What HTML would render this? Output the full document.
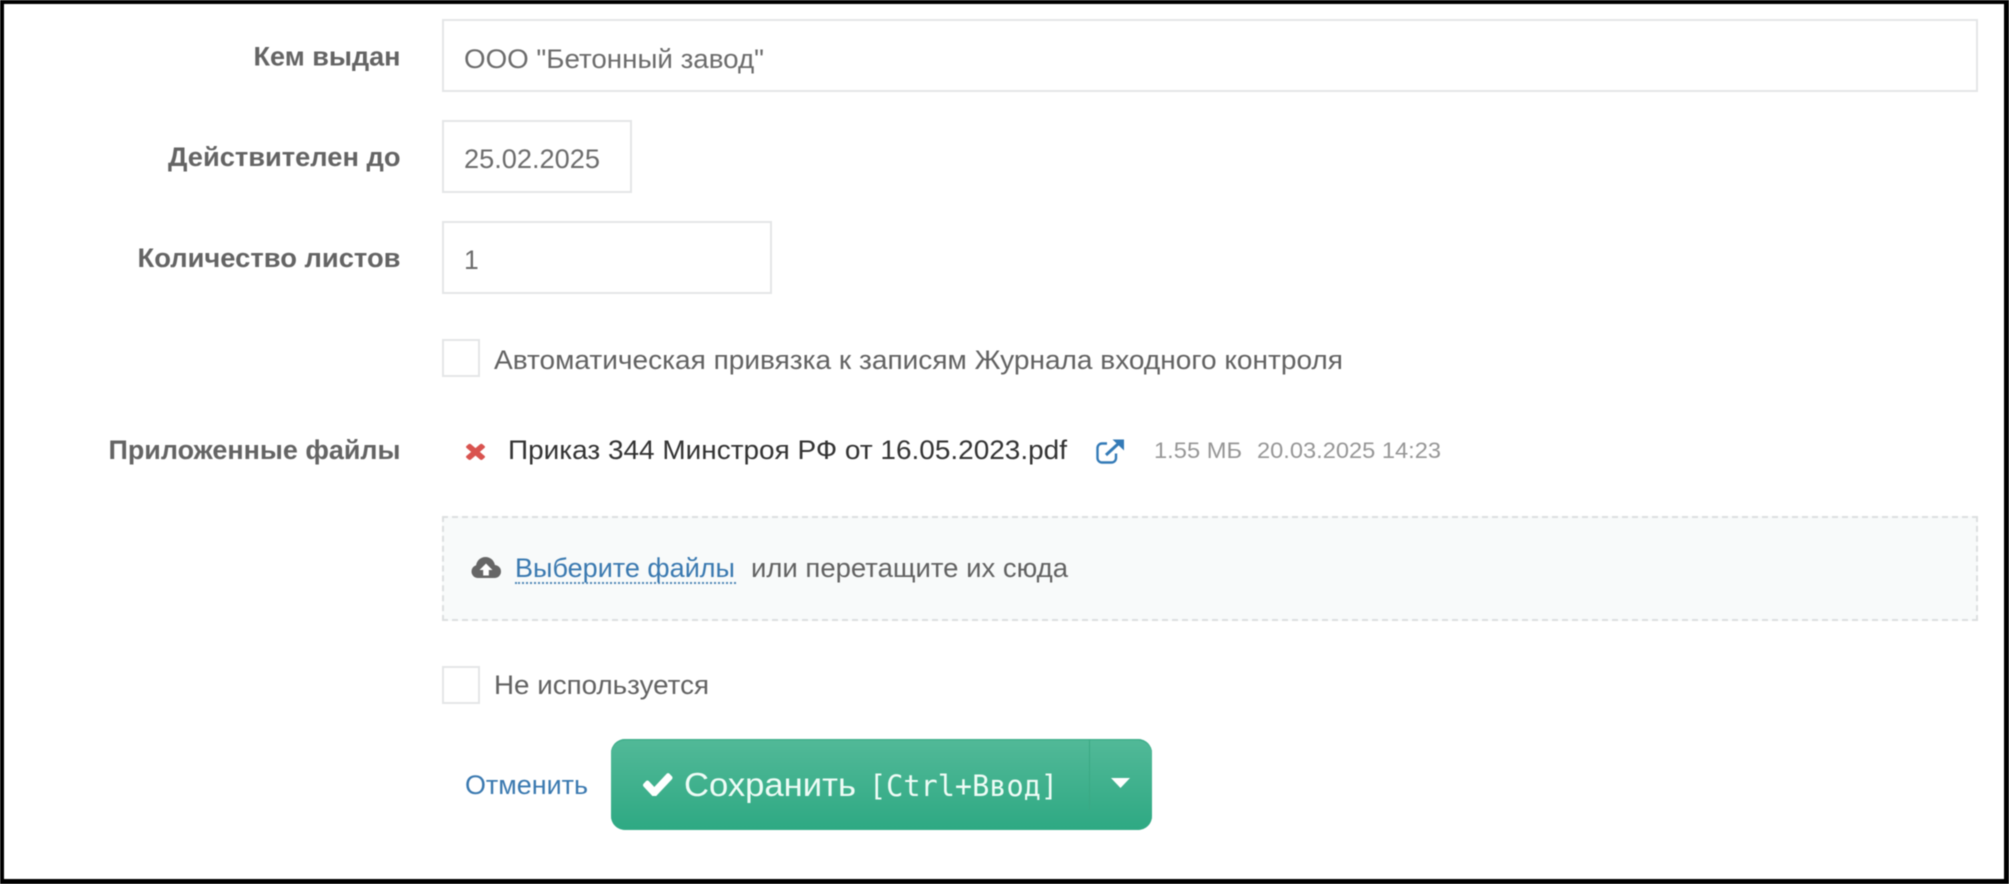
<!DOCTYPE html>
<html lang="ru">
<head>
<meta charset="utf-8">
<title>Форма</title>
<style>
html,body{margin:0;padding:0;background:#fff;}
#p{position:relative;width:2009px;height:884px;overflow:hidden;background:#fff;font-family:"Liberation Sans",Arial,sans-serif;filter:blur(.45px);}
.frame{position:absolute;left:0;top:0;width:2009px;height:884px;box-sizing:border-box;border-style:solid;border-color:#000;border-width:4px 5px 5px 4px;z-index:5;}
.box{position:absolute;box-sizing:border-box;border:2px solid #e4e6e7;background:#fff;}
.drop{position:absolute;box-sizing:border-box;left:442px;top:516px;width:1536px;height:105px;background:#f8fafa;border:2px dashed #dcdfe0;}
.btn{position:absolute;left:611px;top:739px;width:541px;height:91px;border-radius:14px;background:linear-gradient(#52b998,#2ea983);box-shadow:inset 0 1.5px 0 #3fae8b,inset 0 -1.5px 0 #33ab86;}
.div{position:absolute;left:1089px;top:740px;width:1px;height:70px;background:#3aa883;}
.ul{position:absolute;left:515px;top:582px;width:221px;height:0;border-top:2px dotted #4f86b6;}
svg.t{position:absolute;left:0;top:0;}
svg.i{position:absolute;}
text{font-family:"Liberation Sans",Arial,sans-serif;font-size:26.5px;}
.l{font-weight:bold;fill:#646464;}
.v{fill:#6c6c6c;}
.c{fill:#626262;}
.f{fill:#333;}
.s{fill:#969696;font-size:22px;}
.a{fill:#3a79b0;}
.b{fill:#eefcf6;font-size:33px;}
.m{fill:#eefcf6;font-family:"DejaVu Sans Mono","Liberation Mono",monospace;font-size:29px;}
</style>
</head>
<body>
<div id="p">
<div class="box" style="left:442px;top:19px;width:1536px;height:73px"></div>
<div class="box" style="left:442px;top:120px;width:190px;height:73px"></div>
<div class="box" style="left:442px;top:221px;width:330px;height:73px"></div>
<div class="box" style="left:442px;top:339px;width:38px;height:38px"></div>
<div class="drop"></div>
<div class="box" style="left:442px;top:666px;width:38px;height:38px"></div>
<div class="btn"></div>
<div class="div"></div>
<div class="ul"></div>

<svg class="t" width="2009" height="884" xmlns="http://www.w3.org/2000/svg">
<text class="l" x="253.5" y="65.5" textLength="147" lengthAdjust="spacingAndGlyphs">Кем выдан</text>
<text class="l" x="168" y="166" textLength="232.5" lengthAdjust="spacingAndGlyphs">Действителен до</text>
<text class="l" x="137.5" y="267" textLength="263" lengthAdjust="spacingAndGlyphs">Количество листов</text>
<text class="l" x="108.5" y="459" textLength="292" lengthAdjust="spacingAndGlyphs">Приложенные файлы</text>
<text class="v" x="464" y="68" textLength="300" lengthAdjust="spacingAndGlyphs">ООО "Бетонный завод"</text>
<text class="v" x="464" y="168" textLength="136" lengthAdjust="spacingAndGlyphs">25.02.2025</text>
<text class="v" x="464" y="269">1</text>
<text class="c" x="494" y="369" textLength="849" lengthAdjust="spacingAndGlyphs">Автоматическая привязка к записям Журнала входного контроля</text>
<text class="f" x="508" y="459" textLength="559" lengthAdjust="spacingAndGlyphs">Приказ 344 Минстроя РФ от 16.05.2023.pdf</text>
<text class="s" x="1154" y="458" textLength="88" lengthAdjust="spacingAndGlyphs">1.55 МБ</text>
<text class="s" x="1257" y="458" textLength="184" lengthAdjust="spacingAndGlyphs">20.03.2025 14:23</text>
<text class="a" x="515" y="577" textLength="220" lengthAdjust="spacingAndGlyphs">Выберите файлы</text>
<text class="c" x="751" y="577" textLength="317" lengthAdjust="spacingAndGlyphs">или перетащите их сюда</text>
<text class="c" x="494" y="694" textLength="215" lengthAdjust="spacingAndGlyphs">Не используется</text>
<text class="a" x="465" y="794" textLength="123" lengthAdjust="spacingAndGlyphs">Отменить</text>
<text class="b" x="684" y="796" textLength="172" lengthAdjust="spacingAndGlyphs">Сохранить</text>
<text class="m" x="869" y="796" textLength="189" lengthAdjust="spacingAndGlyphs">[Ctrl+Ввод]</text>
</svg>

<svg class="i" style="left:465.500px;top:441.500px" width="19" height="18" viewBox="302 238 1188 1316" preserveAspectRatio="none" xmlns="http://www.w3.org/2000/svg"><path fill="#d9534f" d="M1490 1322q0 40-28 68l-136 136q-28 28-68 28t-68-28l-294-294-294 294q-28 28-68 28t-68-28l-136-136q-28-28-28-68t28-68l294-294-294-294q-28-28-28-68t28-68l136-136q28-28 68-28t68 28l294 294 294-294q28-28 68-28t68 28l136 136q28 28 28 68t-28 68l-294 294 294 294q28 28 28 68z"/></svg>

<svg class="i" style="left:1096px;top:438px" width="28" height="26" viewBox="0 0 28 26" xmlns="http://www.w3.org/2000/svg"><path fill="none" stroke="#337ab7" stroke-width="2.400" d="M11 5.500H6a4.500 4.500 0 0 0-4.500 4.500V20a4.500 4.500 0 0 0 4.500 4.500H15.500a4.500 4.500 0 0 0 4.500-4.500V15.500"/><path fill="none" stroke="#337ab7" stroke-width="3" d="M10 17L22 6"/><path fill="#337ab7" d="M16.500 1.500H28V12.500z"/></svg>

<svg class="i" style="left:471px;top:557px" width="30" height="21" viewBox="0 0 30 21" xmlns="http://www.w3.org/2000/svg"><g fill="#666"><circle cx="7" cy="14.500" r="6.500"/><circle cx="14.500" cy="9.500" r="9.500"/><circle cx="23.500" cy="14.500" r="6.500"/><rect x="7" y="12" width="16" height="9"/></g><path fill="#fff" d="M15 6.500L21.500 13H17.800V18.500H12.200V13H8.500z"/></svg>

<svg class="i" style="left:643px;top:773px" width="29.500" height="23" viewBox="121 330 1550 1130" preserveAspectRatio="none" xmlns="http://www.w3.org/2000/svg"><path fill="#fff" d="M1671 566q0 40-28 68l-724 724-136 136q-28 28-68 28t-68-28l-136-136-362-362q-28-28-28-68t28-68l136-136q28-28 68-28t68 28l294 295 656-657q28-28 68-28t68 28l136 136q28 28 28 68z"/></svg>

<svg class="i" style="left:1111px;top:778px" width="19" height="10" viewBox="0 0 19 10" xmlns="http://www.w3.org/2000/svg"><path fill="#fff" d="M0 0H19L9.500 10z"/></svg>

<div class="frame"></div>
</div>
</body>
</html>
